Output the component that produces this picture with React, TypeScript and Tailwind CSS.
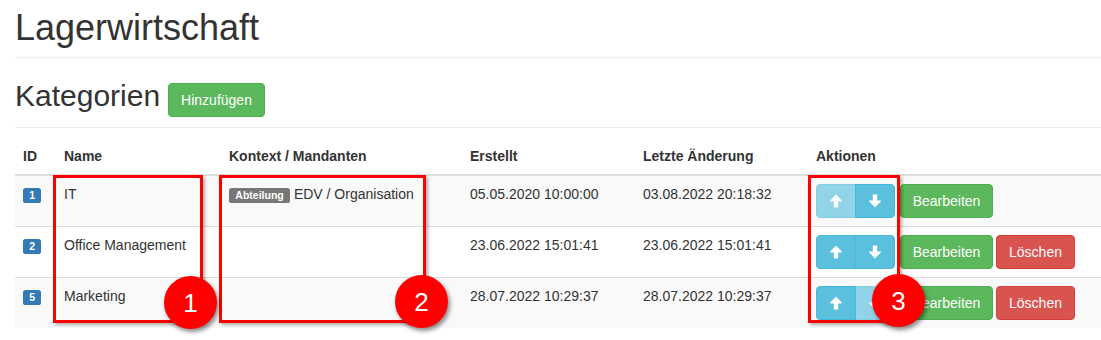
import React from "react";

type Row = {
  id: string;
  name: string;
  ctx?: { label: string; text: string };
  created: string;
  changed: string;
  upDisabled: boolean;
  downDisabled: boolean;
  canDelete: boolean;
  striped: boolean;
  first: boolean;
};

const rows: Row[] = [
  {
    id: "1",
    name: "IT",
    ctx: { label: "Abteilung", text: "EDV / Organisation" },
    created: "05.05.2020 10:00:00",
    changed: "03.08.2022 20:18:32",
    upDisabled: true,
    downDisabled: false,
    canDelete: false,
    striped: true,
    first: true,
  },
  {
    id: "2",
    name: "Office Management",
    created: "23.06.2022 15:01:41",
    changed: "23.06.2022 15:01:41",
    upDisabled: false,
    downDisabled: false,
    canDelete: true,
    striped: false,
    first: false,
  },
  {
    id: "5",
    name: "Marketing",
    created: "28.07.2022 10:29:37",
    changed: "28.07.2022 10:29:37",
    upDisabled: false,
    downDisabled: true,
    canDelete: true,
    striped: true,
    first: false,
  },
];

function Arrow({ down }: { down?: boolean }) {
  return (
    <svg
      width="12"
      height="14"
      viewBox="0 0 12 14"
      className={down ? "rotate-180" : ""}
      fill="white"
    >
      <path d="M6 0.5 L11.8 6.6 L11.8 7.6 H8.2 V13.5 H3.8 V7.6 H0.2 L0.2 6.6 Z" />
    </svg>
  );
}

function Circle({ n, cls }: { n: string; cls: string }) {
  return (
    <div
      className={
        "absolute w-[53px] h-[53px] rounded-full bg-[#ff0000] flex items-center justify-center text-white text-[26px] leading-none shadow-[2px_3px_4px_rgba(0,0,0,0.45)] " +
        cls
      }
    >
      {n}
    </div>
  );
}

export default function App() {
  return (
    <div className="relative bg-white font-['Liberation_Sans',Arial,sans-serif] text-[#333] text-[14px] leading-[20px] pl-[15px] pb-[12px] overflow-hidden">
      <div className="pt-[8px] pb-[9px] border-b border-[#eee]">
        <h1 className="text-[36px] leading-[39.6px] font-normal">Lagerwirtschaft</h1>
      </div>

      <div className="mt-[21px] pb-[10px] border-b border-[#eee] flex items-start">
        <h2 className="text-[30px] leading-[33px] font-normal">Kategorien</h2>
        <button className="ml-[8px] mt-[4px] h-[34px] px-[12px] rounded-[4px] bg-[#5cb85c] border border-[#4cae4c] text-white text-[14px] leading-[20px]">
          Hinzufügen
        </button>
      </div>

      <table className="mt-[10px] w-full table-fixed border-separate border-spacing-0">
        <colgroup>
          <col className="w-[41px]" />
          <col className="w-[165px]" />
          <col className="w-[241px]" />
          <col className="w-[173px]" />
          <col className="w-[173px]" />
          <col />
        </colgroup>
        <thead>
          <tr>
            {["ID", "Name", "Kontext / Mandanten", "Erstellt", "Letzte Änderung", "Aktionen"].map((h) => (
              <th
                key={h}
                className="text-left font-bold p-[8px] border-b-2 border-[#ddd] align-bottom whitespace-nowrap"
              >
                {h}
              </th>
            ))}
          </tr>
        </thead>
        <tbody>
          {rows.map((r) => {
            const td =
              "p-[8px] align-top " +
              (r.first ? "" : "border-t border-[#ddd] ") +
              (r.striped ? "bg-[#f9f9f9]" : "bg-white");
            return (
              <tr key={r.id}>
                <td className={td}>
                  <span className="inline-block bg-[#337ab7] text-white font-bold text-[10.5px] leading-none pt-[2.1px] pb-[3.15px] px-[6.3px] rounded-[2.6px]">
                    {r.id}
                  </span>
                </td>
                <td className={td}>{r.name}</td>
                <td className={td}>
                  {r.ctx && (
                    <>
                      <span className="inline-block bg-[#777] text-white font-bold text-[10.5px] leading-none pt-[2.1px] pb-[3.15px] px-[6.3px] rounded-[2.6px]">
                        {r.ctx.label}
                      </span>{" "}
                      {r.ctx.text}
                    </>
                  )}
                </td>
                <td className={td + " whitespace-nowrap"}>{r.created}</td>
                <td className={td + " whitespace-nowrap"}>{r.changed}</td>
                <td className={td + " whitespace-nowrap"}>
                  <div className="flex items-start">
                    <div className="flex">
                      <button
                        className={
                          "w-[40px] h-[34px] flex items-center justify-center bg-[#5bc0de] border border-[#46b8da] rounded-l-[4px] " +
                          (r.upDisabled ? "opacity-65" : "")
                        }
                      >
                        <Arrow />
                      </button>
                      <button
                        className={
                          "-ml-px w-[40px] h-[34px] flex items-center justify-center bg-[#5bc0de] border border-[#46b8da] rounded-r-[4px] " +
                          (r.downDisabled ? "opacity-65" : "")
                        }
                      >
                        <Arrow down />
                      </button>
                    </div>
                    <button className="ml-[5px] h-[34px] w-[93px] rounded-[4px] bg-[#5cb85c] border border-[#4cae4c] text-white">
                      Bearbeiten
                    </button>
                    {r.canDelete && (
                      <button className="ml-[3px] h-[34px] w-[79px] rounded-[4px] bg-[#d9534f] border border-[#d43f3a] text-white">
                        Löschen
                      </button>
                    )}
                  </div>
                </td>
              </tr>
            );
          })}
        </tbody>
      </table>

      {/* Annotations */}
      <div className="absolute left-[53px] top-[175px] w-[150px] h-[148px] border-[3px] border-[#ff0000] shadow-[2px_2px_3px_rgba(0,0,0,0.3)]" />
      <div className="absolute left-[219px] top-[175px] w-[207px] h-[148px] border-[3px] border-[#ff0000] shadow-[2px_2px_3px_rgba(0,0,0,0.3)]" />
      <div className="absolute left-[808px] top-[175px] w-[92px] h-[148px] border-[3px] border-[#ff0000] shadow-[2px_2px_3px_rgba(0,0,0,0.3)]" />
      <Circle n="1" cls="left-[164px] top-[276px]" />
      <Circle n="2" cls="left-[395px] top-[275px]" />
      <Circle n="3" cls="left-[872px] top-[274px]" />
    </div>
  );
}
